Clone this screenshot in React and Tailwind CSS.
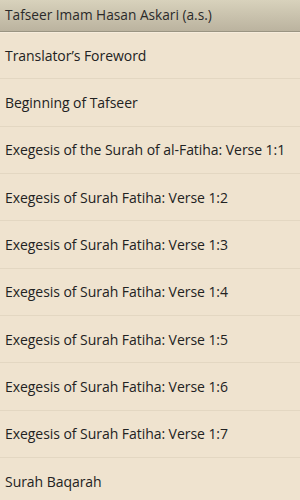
import React from 'react';

const chapters = [
  "Translator\u2019s Foreword",
  'Beginning of Tafseer',
  'Exegesis of the Surah of al-Fatiha: Verse 1:1',
  'Exegesis of Surah Fatiha: Verse 1:2',
  'Exegesis of Surah Fatiha: Verse 1:3',
  'Exegesis of Surah Fatiha: Verse 1:4',
  'Exegesis of Surah Fatiha: Verse 1:5',
  'Exegesis of Surah Fatiha: Verse 1:6',
  'Exegesis of Surah Fatiha: Verse 1:7',
  'Surah Baqarah',
];

const App = () => {
  return (
    <div className="w-[300px] h-[500px] overflow-hidden bg-[#efe3cf] font-['Open_Sans','Noto_Sans',sans-serif]">
      {/* Title bar */}
      <div className="h-[32px] flex items-center px-[5px] bg-gradient-to-b from-[#d8d2bc] to-[#bbb39f] border-b border-[#9a9482] shadow-[0_1px_0_#f6ecdc]">
        <span className="text-[13.7px] text-[#2a2a2a]">Tafseer Imam Hasan Askari (a.s.)</span>
      </div>

      {/* Chapter list */}
      <div className="flex flex-col">
        {chapters.map((title) => (
          <div
            key={title}
            className="h-[47.33px] flex items-center px-[5px] border-b border-[#e3d7c2] shrink-0"
          >
            <span className="text-[14px] text-[#222] tracking-[-0.05px] whitespace-nowrap">{title}</span>
          </div>
        ))}
      </div>
    </div>
  );
};

export default App;
